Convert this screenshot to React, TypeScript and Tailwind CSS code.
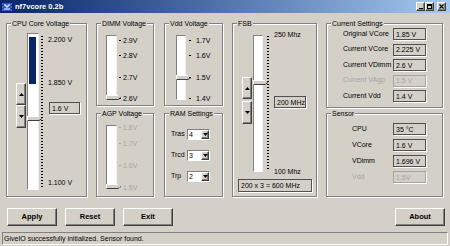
import React from 'react';

type Mark = { text: string; y: number };

const RAISED =
  'bg-[#D4D0C8] border border-t-white border-l-white border-r-[#404040] border-b-[#404040] shadow-[inset_-1px_-1px_0_#808080]';
const SUNKEN = 'border border-t-[#808080] border-l-[#808080] border-r-white border-b-white';

function Group({ label, className = '', children }: { label: string; className?: string; children?: React.ReactNode }) {
  return (
    <div className={`relative shrink-0 border border-[#808080] shadow-[inset_1px_1px_0_#fff,1px_1px_0_#fff] ${className}`}>
      <span className="absolute left-[4px] top-[-5px] whitespace-nowrap bg-[#D4D0C8] px-[1px] leading-[9px]">{label}</span>
      {children}
    </div>
  );
}

function Thumb({ top }: { top: number }) {
  return (
    <svg className="absolute left-[-1px]" style={{ top: top - 2 }} width="16" height="5" viewBox="0 0 16 5">
      <path d="M0 0H12L15 2.5L12 5H0Z" fill="#D4D0C8" />
      <path d="M0.5 4.5V0.5H11.8" fill="none" stroke="#fff" />
      <path d="M0.5 4.5H12L15 2.5" fill="none" stroke="#404040" />
    </svg>
  );
}

function Track({ className, thumb, fill }: { className: string; thumb: number; fill?: [number, number] }) {
  return (
    <div className={`relative shrink-0 bg-white border border-t-[#808080] border-l-[#808080] border-r-[#f0f0f0] border-b-white ${className}`}>
      {fill && <div className="absolute left-px w-[7px] bg-[#0A246A]" style={{ top: fill[0], height: fill[1] }} />}
      <Thumb top={thumb} />
    </div>
  );
}

function Arrow({ up }: { up?: boolean }) {
  return (
    <svg width="5" height="3" viewBox="0 0 5 3">
      <path d={up ? 'M2.5 0L5 3H0Z' : 'M0 0H5L2.5 3Z'} fill="#000" />
    </svg>
  );
}

function Spinner({ className }: { className: string }) {
  return (
    <div className={`flex shrink-0 flex-col ${className}`}>
      <div className={`${RAISED} flex h-[22px] w-[10px] items-center justify-center`}>
        <Arrow up />
      </div>
      <div className={`${RAISED} flex h-[23px] w-[10px] items-center justify-center`}>
        <Arrow />
      </div>
    </div>
  );
}

function Ticks({ className }: { className: string }) {
  return (
    <div
      className={`w-[2px] shrink-0 [background-image:repeating-linear-gradient(to_bottom,#000_0,#000_1px,transparent_1px,transparent_3px)] ${className}`}
    />
  );
}

function Scale({
  marks,
  dash,
  gap = 'gap-[2px]',
  disabled,
  className = '',
  children,
}: {
  marks: Mark[];
  dash?: boolean;
  gap?: string;
  disabled?: boolean;
  className?: string;
  children?: React.ReactNode;
}) {
  return (
    <div className={`relative flex-1 ${disabled ? 'text-[#a4a4a4]' : ''} ${className}`}>
      {marks.map((m) => (
        <div
          key={m.text}
          className={`absolute left-0 flex h-[8px] items-center whitespace-nowrap leading-none ${gap}`}
          style={{ top: m.y - 4 }}
        >
          {dash && <span className={`h-px w-[2px] ${disabled ? 'bg-[#a4a4a4]' : 'bg-black'}`} />}
          <span>{m.text}</span>
        </div>
      ))}
      {children}
    </div>
  );
}

function ValueBox({ children, className = '', disabled }: { children: React.ReactNode; className?: string; disabled?: boolean }) {
  return (
    <div
      className={`flex shrink-0 items-center whitespace-nowrap border px-[2px] leading-none shadow-[1px_1px_0_#fff] ${
        disabled ? 'border-[#a4a4a4] text-[#a4a4a4]' : 'border-[#505050]'
      } ${className}`}
    >
      {children}
    </div>
  );
}

function Combo({ value }: { value: string }) {
  return (
    <div className={`flex h-[11px] w-[23px] bg-white ${SUNKEN}`}>
      <span className="flex-1 pl-px leading-[9px]">{value}</span>
      <div className={`${RAISED} flex w-[8px] items-center justify-center`}>
        <Arrow />
      </div>
    </div>
  );
}

function Button({ label, className = '' }: { label: string; className?: string }) {
  return (
    <div className={`${RAISED} flex h-[18px] w-[50px] items-center justify-center text-[7.5px] font-bold ${className}`}>
      {label}
    </div>
  );
}

function CaptionButton({ children }: { children: React.ReactNode }) {
  return <div className={`${RAISED} flex h-[9px] w-[9px] items-center justify-center`}>{children}</div>;
}

function TitleBar() {
  return (
    <div className="flex h-[13px] shrink-0 items-center bg-linear-to-r from-[#0A246A] to-[#A6CAF0] pl-[2px] pr-[4px]">
      <svg width="10" height="10" viewBox="0 0 10 10">
        <rect x="1" y="1" width="8" height="8" fill="#2f56c8" />
        <path d="M2 3h2v2h2V3h2M2 7h6" stroke="#fff" strokeWidth="1" fill="none" />
        <path d="M0 2h1M0 5h1M0 8h1M9 2h1M9 5h1M9 8h1" stroke="#9fb4ff" />
      </svg>
      <span className="ml-[3px] text-[7.5px] font-bold leading-none text-white">nf7vcore 0.2b</span>
      <div className="ml-auto flex items-center">
        <CaptionButton>
          <span className="mt-[4px] h-px w-[4px] bg-black" />
        </CaptionButton>
        <CaptionButton>
          <span className="h-[5px] w-[5px] border border-t-2 border-black" />
        </CaptionButton>
        <div className="ml-[3px]">
          <CaptionButton>
            <svg width="5" height="5" viewBox="0 0 5 5">
              <path d="M0.5 0.5L4.5 4.5M4.5 0.5L0.5 4.5" stroke="#000" strokeWidth="1.2" />
            </svg>
          </CaptionButton>
        </div>
      </div>
    </div>
  );
}

const current = [
  { label: 'Original VCore', value: '1.85 V' },
  { label: 'Current VCore', value: '2.225 V' },
  { label: 'Current VDimm', value: '2.6 V' },
  { label: 'Current VAgp', value: '1.5 V', disabled: true },
  { label: 'Current Vdd', value: '1.4 V' },
];

const sensor = [
  { label: 'CPU', value: '35 °C' },
  { label: 'VCore', value: '1.6 V' },
  { label: 'VDimm', value: '1.696 V' },
  { label: 'Vdd', value: '1.5V', disabled: true },
];

export default function App() {
  return (
    <div className="flex h-[246px] w-[450px] flex-col overflow-hidden bg-[#D4D0C8] text-[7px] text-black [font-family:'Liberation_Sans',Arial,sans-serif]">
      <TitleBar />

      <div className="flex gap-[9px] pl-[6px] pt-[10px]">
        <Group label="CPU Core Voltage" className="h-[174px] w-[81px]">
          <div className="flex h-full items-start">
            <Spinner className="ml-[9px] mt-[59px]" />
            <Track className="ml-[1px] mt-[9px] h-[157px] w-[12px]" thumb={84} fill={[3, 47]} />
            <Ticks className="ml-[2px] mt-[12px] h-[152px]" />
            <Scale
              className="ml-[5px] h-full"
              marks={[
                { text: '2.200 V', y: 15 },
                { text: '1.850 V', y: 58 },
                { text: '1.100 V', y: 158 },
              ]}
            >
              <ValueBox className="ml-[1px] mt-[78px] h-[12px] w-[31px]">1.6 V</ValueBox>
            </Scale>
          </div>
        </Group>

        <div className="flex flex-col gap-[7px]">
          <div className="flex gap-[10px]">
            <Group label="DIMM Voltage" className="h-[83px] w-[58px]">
              <div className="flex h-full items-start">
                <Track className="ml-[9px] mt-[11px] h-[65px] w-[11px]" thumb={61} />
                <Scale
                  dash
                  className="ml-[2px] h-full"
                  marks={[
                    { text: '2.9V', y: 16 },
                    { text: '2.8V', y: 31 },
                    { text: '2.7V', y: 53 },
                    { text: '2.6V', y: 74 },
                  ]}
                />
              </div>
            </Group>
            <Group label="Vdd Voltage" className="h-[83px] w-[59px]">
              <div className="flex h-full items-start">
                <Track className="ml-[11px] mt-[11px] h-[65px] w-[10px]" thumb={41} />
                <Scale
                  dash
                  gap="gap-[5px]"
                  className="ml-[3px] h-full"
                  marks={[
                    { text: '1.7V', y: 16 },
                    { text: '1.6V', y: 31 },
                    { text: '1.5V', y: 53 },
                    { text: '1.4V', y: 74 },
                  ]}
                />
              </div>
            </Group>
          </div>
          <div className="flex gap-[10px]">
            <Group label="AGP Voltage" className="h-[84px] w-[58px]">
              <div className="flex h-full items-start">
                <Track className="ml-[9px] mt-[11px] h-[63px] w-[11px]" thumb={60} />
                <Scale
                  dash
                  disabled
                  className="ml-[2px] h-full"
                  marks={[
                    { text: '1.8V', y: 13 },
                    { text: '1.7V', y: 29 },
                    { text: '1.6V', y: 51 },
                    { text: '1.5V', y: 73 },
                  ]}
                />
              </div>
            </Group>
            <Group label="RAM Settings" className="h-[84px] w-[59px]">
              <div className="flex flex-col gap-[10px] pl-[6px] pt-[15px]">
                {[
                  ['Tras', '4'],
                  ['Trcd', '3'],
                  ['Trp', '2'],
                ].map(([name, v]) => (
                  <div key={name} className="flex h-[11px] items-center">
                    <span className="w-[16px]">{name}</span>
                    <Combo value={v} />
                  </div>
                ))}
              </div>
            </Group>
          </div>
        </div>

        <Group label="FSB" className="h-[174px] w-[85px]">
          <div className="flex items-start">
            <Spinner className="ml-[9px] mt-[53px] gap-[2px]" />
            <Track className="ml-[1px] mt-[11px] h-[137px] w-[10px]" thumb={46} />
            <Ticks className="ml-[4px] mt-[12px] h-[135px]" />
            <Scale
              className="ml-[5px] h-[148px]"
              marks={[
                { text: '250 Mhz', y: 10 },
                { text: '100 Mhz', y: 147 },
              ]}
            >
              <ValueBox className="mt-[72px] h-[12px] w-[32px]">200 MHz</ValueBox>
            </Scale>
          </div>
          <ValueBox className="ml-[5px] mt-[7px] h-[13px] w-[74px]">200 x 3 = 600 MHz</ValueBox>
        </Group>

        <div className="flex flex-col gap-[5px]">
          <Group label="Current Settings" className="h-[85px] w-[117px]">
            <div className="flex flex-col gap-[3.5px] pl-[16px] pt-[4px]">
              {current.map((r) => (
                <div key={r.label} className="flex h-[12px] items-center">
                  <span className={`w-[50px] whitespace-nowrap ${r.disabled ? 'text-[#a4a4a4]' : ''}`}>{r.label}</span>
                  <ValueBox className="h-[12px] w-[33px]" disabled={r.disabled}>
                    {r.value}
                  </ValueBox>
                </div>
              ))}
            </div>
          </Group>
          <Group label="Sensor" className="h-[84px] w-[117px]">
            <div className="flex flex-col gap-[4px] pl-[25px] pt-[9px]">
              {sensor.map((r) => (
                <div key={r.label} className="flex h-[12px] items-center">
                  <span className={`w-[41px] ${r.disabled ? 'text-[#a4a4a4]' : ''}`}>{r.label}</span>
                  <ValueBox className="h-[12px] w-[33px]" disabled={r.disabled}>
                    {r.value}
                  </ValueBox>
                </div>
              ))}
            </div>
          </Group>
        </div>
      </div>

      <div className="mt-[11px] flex gap-[8px] pl-[7px] pr-[5px]">
        <Button label="Apply" />
        <Button label="Reset" />
        <Button label="Exit" />
        <Button label="About" className="ml-auto" />
      </div>

      <div className={`mx-[2px] mt-[6px] flex h-[13px] items-center pl-px leading-none ${SUNKEN}`}>
        GiveIO successfully initialized. Sensor found.
      </div>
    </div>
  );
}
